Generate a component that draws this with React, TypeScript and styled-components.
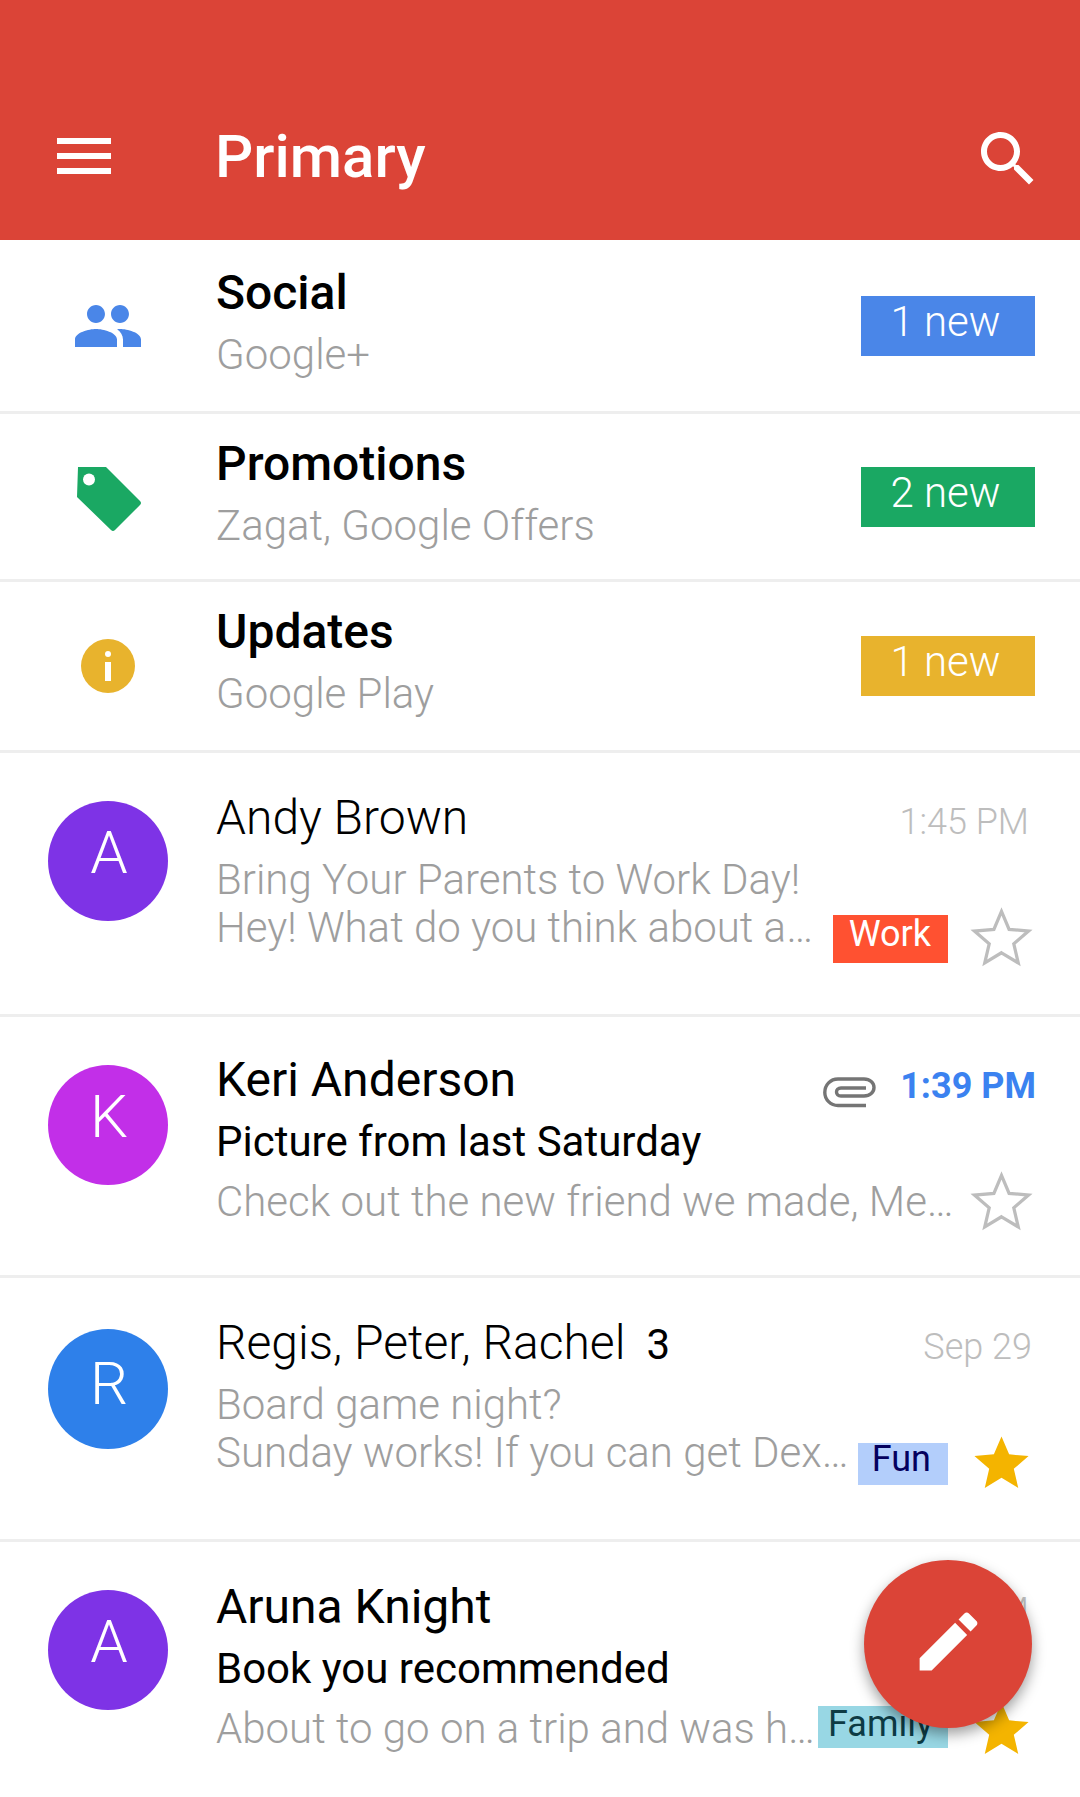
import React from 'react';
import styled, { createGlobalStyle } from 'styled-components';

const GlobalStyle = createGlobalStyle`
  html, body {
    margin: 0;
    padding: 0;
    background: #fff;
  }
  * {
    box-sizing: border-box;
  }
`;

const Screen = styled.div`
  position: relative;
  width: 1080px;
  height: 1797px;
  overflow: hidden;
  background: #fff;
  font-family: Roboto, 'Noto Sans', sans-serif;
`;

const Toolbar = styled.header`
  height: 240px;
  background: #db4437;
  display: flex;
  align-items: flex-start;
  padding: 120px 36px 0 48px;
  color: #fff;
`;

const ToolbarTitle = styled.h1`
  flex: 1;
  margin: 0 0 0 95px;
  font-size: 60px;
  line-height: 74px;
  font-weight: 500;
`;

const CategoryRow = styled.div<{ $height: number }>`
  height: ${({ $height }) => $height}px;
  display: flex;
  align-items: center;
  border-bottom: 3px solid #eeeeee;
  padding-right: 45px;
`;

const IconCell = styled.div`
  width: 216px;
  flex: none;
  padding-left: 72px;
  display: flex;
  align-items: center;
`;

const CategoryText = styled.div<{ $lift: number }>`
  flex: 1;
  margin-bottom: ${({ $lift }) => $lift}px;
`;

const CategoryTitle = styled.div`
  font-size: 48px;
  line-height: 62px;
  margin-bottom: 1px;
  font-weight: 500;
  color: #000;
`;

const CategorySub = styled.div`
  font-size: 42px;
  line-height: 60px;
  font-weight: 300;
  color: #9e9e9e;
`;

const Badge = styled.div<{ $color: string }>`
  width: 174px;
  height: 60px;
  padding-right: 5px;
  background: ${({ $color }) => $color};
  color: #fff;
  font-size: 42px;
  font-weight: 300;
  line-height: 52px;
  text-align: center;
`;

const MailRow = styled.div<{ $height: number; $top: number }>`
  height: ${({ $height }) => $height}px;
  display: flex;
  align-items: flex-start;
  border-bottom: 3px solid #eeeeee;
  padding: ${({ $top }) => $top}px 0 0 48px;
  &:last-of-type {
    border-bottom: none;
  }
`;

const Avatar = styled.div<{ $color: string; $top: number; $line: number }>`
  width: 120px;
  height: 120px;
  margin-top: ${({ $top }) => $top}px;
  padding-left: 2px;
  flex: none;
  border-radius: 50%;
  background: ${({ $color }) => $color};
  color: #fff;
  font-size: 60px;
  font-weight: 300;
  line-height: ${({ $line }) => $line}px;
  text-align: center;
`;

const MailBody = styled.div`
  flex: 1;
  min-width: 0;
  margin-left: 48px;
`;

const MailHead = styled.div`
  display: flex;
  align-items: center;
  height: 56px;
`;

const Sender = styled.span<{ $unread?: boolean }>`
  font-size: 48px;
  font-weight: ${({ $unread }) => ($unread ? 400 : 300)};
  color: #000;
`;

const ThreadCount = styled.span`
  margin-left: 21px;
  margin-top: 4px;
  font-size: 42px;
  font-weight: 400;
  color: #000;
`;

const MailTime = styled.span<{ $unread?: boolean; $right: number; $top: number }>`
  margin-left: auto;
  margin-top: ${({ $top }) => $top}px;
  margin-right: ${({ $right }) => $right}px;
  font-size: 36px;
  font-weight: ${({ $unread }) => ($unread ? 700 : 300)};
  color: ${({ $unread }) => ($unread ? '#3b82f0' : '#bdbdbd')};
`;

const ClipIcon = styled.svg`
  width: 53px;
  height: 31px;
  margin-left: auto;
  margin-top: 26px;
  & + ${MailTime} {
    margin-left: 24px;
  }
`;

const Subject = styled.div<{ $unread?: boolean }>`
  margin-top: 5px;
  font-size: 42px;
  line-height: 60px;
  font-weight: ${({ $unread }) => ($unread ? 400 : 300)};
  color: ${({ $unread }) => ($unread ? '#000' : '#9e9e9e')};
`;

const SnippetRow = styled.div<{ $unread?: boolean }>`
  display: flex;
  align-items: flex-start;
  margin-top: ${({ $unread }) => ($unread ? '0' : '-12px')};
`;

const Snippet = styled.div`
  flex: 1;
  min-width: 0;
  font-size: 42px;
  line-height: 60px;
  font-weight: 300;
  color: #9e9e9e;
  white-space: nowrap;
`;

const Tag = styled.span<{ $bg: string; $fg: string; $height: number; $left: number; $right: number; $top: number; $line: number }>`
  height: ${({ $height }) => $height}px;
  margin-top: ${({ $top }) => $top}px;
  padding: 0 ${({ $right }) => $right}px 0 ${({ $left }) => $left}px;
  background: ${({ $bg }) => $bg};
  color: ${({ $fg }) => $fg};
  font-size: 36px;
  line-height: ${({ $line }) => $line}px;
  white-space: nowrap;
`;

const StarBox = styled.div<{ $unread?: boolean }>`
  width: 132px;
  flex: none;
  display: flex;
  padding-left: 21px;
  margin-top: ${({ $unread }) => ($unread ? '-2px' : '8px')};
`;

const StarIcon = styled.svg`
  width: 65px;
  height: 65px;
  overflow: visible;
`;

const SearchIcon = styled.svg`
  width: 72px;
  height: 72px;
  margin-top: 3px;
`;

const PencilIcon = styled.svg`
  width: 77px;
  height: 77px;
  margin-bottom: 6px;
`;

const Fab = styled.button`
  position: absolute;
  left: 864px;
  top: 1560px;
  width: 168px;
  height: 168px;
  border: none;
  padding: 0;
  border-radius: 50%;
  background: #db4437;
  box-shadow: 0 6px 14px rgba(0, 0, 0, 0.38);
  display: flex;
  align-items: center;
  justify-content: center;
`;

const IconMenu = () => (
  <svg width="72" height="72" viewBox="0 0 24 24" fill="#fff">
    <path d="M3 18h18v-2H3v2zm0-5h18v-2H3v2zm0-7v2h18V6H3z" />
  </svg>
);

const IconSearch = () => (
  <SearchIcon viewBox="0 0 24 24" fill="#fff">
    <path d="M15.5 14h-.79l-.28-.27C15.41 12.59 16 11.11 16 9.5 16 5.91 13.09 3 9.5 3S3 5.91 3 9.5 5.91 16 9.5 16c1.61 0 3.09-.59 4.23-1.57l.27.28v.79l5 4.99L20.49 19l-4.99-5zm-6 0C7.01 14 5 11.99 5 9.5S7.01 5 9.5 5 14 7.01 14 9.5 11.99 14 9.5 14z" />
  </SearchIcon>
);

const IconGroup = () => (
  <svg width="72" height="72" viewBox="0 0 24 24" fill="#4a86e8">
    <path d="M16 11c1.66 0 2.99-1.34 2.99-3S17.66 5 16 5c-1.66 0-3 1.34-3 3s1.34 3 3 3zm-8 0c1.66 0 2.99-1.34 2.99-3S9.66 5 8 5C6.34 5 5 6.34 5 8s1.34 3 3 3zm0 2c-2.33 0-7 1.17-7 3.5V19h14v-2.5c0-2.33-4.67-3.5-7-3.5zm8 0c-.29 0-.62.02-.97.05 1.16.84 1.97 1.97 1.97 3.45V19h6v-2.5c0-2.33-4.67-3.5-7-3.5z" />
  </svg>
);

const IconTag = () => (
  <svg width="72" height="72" viewBox="-5 -6 72 72">
    <path fill="#1aa863" d="M1 0H29L63 34Q65 36 63 38L38 63Q36 65 34 63L0 30Z" />
    <circle cx="12" cy="12.5" r="6" fill="#fff" />
  </svg>
);

const IconInfo = () => (
  <svg width="72" height="72" viewBox="0 0 72 72">
    <circle cx="36" cy="36" r="27" fill="#e8b32d" />
    <circle cx="36" cy="24" r="3" fill="#fff" />
    <rect x="33" y="32" width="6" height="19" fill="#fff" />
  </svg>
);

const STAR = 'M12 17.27L18.18 21l-1.64-7.03L22 9.24l-7.19-.61L12 2 9.19 8.63 2 9.24l5.46 4.73L5.82 21z';

const Star = ({ on }: { on?: boolean }) => (
  <StarIcon viewBox="0 0 24 24">
    {on ? (
      <path d={STAR} fill="#f4b400" />
    ) : (
      <path d={STAR} fill="none" stroke="#bdbdbd" strokeWidth="1.2" />
    )}
  </StarIcon>
);

const Clip = () => (
  <ClipIcon viewBox="0 0 53 31" fill="none" stroke="#757575" strokeWidth="3.4">
    <path d="M43 28.5H15C7.5 28.5 1.8 22.5 1.8 15.5 1.8 8 7.5 2 15 2H41C47 2 51 6 51 10.5 51 15 47 19 41 19H18C15 19 13.5 17 13.5 15 13.5 13 15 11 18 11H43" />
  </ClipIcon>
);

const categories = [
  { title: 'Social', sub: 'Google+', badge: '1 new', color: '#4a86e8', height: 174, lift: 4, icon: <IconGroup /> },
  { title: 'Promotions', sub: 'Zagat, Google Offers', badge: '2 new', color: '#1aa863', height: 168, lift: 4, icon: <IconTag /> },
  { title: 'Updates', sub: 'Google Play', badge: '1 new', color: '#e8b32d', height: 171, lift: 8, icon: <IconInfo /> },
];

type Mail = {
  letter: string;
  color: string;
  rowTop: number;
  avatarTop: number;
  letterLine: number;
  sender: string;
  count?: string;
  time: string;
  timeRight: number;
  timeTop: number;
  clip?: boolean;
  unread?: boolean;
  subject: string;
  snippet: string;
  tag?: { text: string; bg: string; fg: string; height: number; left: number; right: number; top: number; line: number };
  starred?: boolean;
  height: number;
};

const mails: Mail[] = [
  {
    letter: 'A',
    color: '#7e33e6',
    rowTop: 36,
    avatarTop: 12,
    letterLine: 104,
    sender: 'Andy Brown',
    time: '1:45 PM',
    timeRight: 51,
    timeTop: 10,
    subject: 'Bring Your Parents to Work Day!',
    snippet: 'Hey! What do you think about a…',
    tag: { text: 'Work', bg: '#ff5131', fg: '#fff', height: 48, left: 16, right: 17, top: 17, line: 38 },
    height: 264,
  },
  {
    letter: 'K',
    color: '#c22fe8',
    rowTop: 34,
    avatarTop: 14,
    letterLine: 104,
    sender: 'Keri Anderson',
    time: '1:39 PM',
    timeRight: 44,
    timeTop: 14,
    clip: true,
    unread: true,
    subject: 'Picture from last Saturday',
    snippet: 'Check out the new friend we made, Me…',
    height: 261,
  },
  {
    letter: 'R',
    color: '#2e80ea',
    rowTop: 36,
    avatarTop: 15,
    letterLine: 110,
    sender: 'Regis, Peter, Rachel',
    count: '3',
    time: 'Sep 29',
    timeRight: 48,
    timeTop: 10,
    subject: 'Board game night?',
    snippet: 'Sunday works! If you can get Dex…',
    tag: { text: 'Fun', bg: '#b3cefb', fg: '#04005e', height: 42, left: 14, right: 17, top: 20, line: 32 },
    starred: true,
    height: 264,
  },
  {
    letter: 'A',
    color: '#7e33e6',
    rowTop: 36,
    avatarTop: 12,
    letterLine: 104,
    sender: 'Aruna Knight',
    time: '1:30 PM',
    timeRight: 51,
    timeTop: 10,
    unread: true,
    subject: 'Book you recommended',
    snippet: 'About to go on a trip and was h…',
    tag: { text: 'Family', bg: '#98d7e4', fg: '#0d3b44', height: 42, left: 10, right: 15, top: 7, line: 36 },
    starred: true,
    height: 255,
  },
];

const App = () => (
  <Screen>
    <GlobalStyle />
    <Toolbar>
      <IconMenu />
      <ToolbarTitle>Primary</ToolbarTitle>
      <IconSearch />
    </Toolbar>
    {categories.map((c) => (
      <CategoryRow key={c.title} $height={c.height}>
        <IconCell>{c.icon}</IconCell>
        <CategoryText $lift={c.lift}>
          <CategoryTitle>{c.title}</CategoryTitle>
          <CategorySub>{c.sub}</CategorySub>
        </CategoryText>
        <Badge $color={c.color}>{c.badge}</Badge>
      </CategoryRow>
    ))}
    {mails.map((m) => (
      <MailRow key={m.sender} $height={m.height} $top={m.rowTop}>
        <Avatar $color={m.color} $top={m.avatarTop} $line={m.letterLine}>
          {m.letter}
        </Avatar>
        <MailBody>
          <MailHead>
            <Sender $unread={m.unread}>{m.sender}</Sender>
            {m.count && <ThreadCount>{m.count}</ThreadCount>}
            {m.clip && <Clip />}
            <MailTime $right={m.timeRight} $top={m.timeTop} $unread={m.unread && m.clip}>
              {m.time}
            </MailTime>
          </MailHead>
          <Subject $unread={m.unread}>{m.subject}</Subject>
          <SnippetRow $unread={m.unread}>
            <Snippet>{m.snippet}</Snippet>
            {m.tag && (
              <Tag
                $bg={m.tag.bg}
                $fg={m.tag.fg}
                $height={m.tag.height}
                $left={m.tag.left}
                $right={m.tag.right}
                $top={m.tag.top}
                $line={m.tag.line}
              >
                {m.tag.text}
              </Tag>
            )}
            <StarBox $unread={m.unread}>
              <Star on={m.starred} />
            </StarBox>
          </SnippetRow>
        </MailBody>
      </MailRow>
    ))}
    <Fab aria-label="Compose">
      <PencilIcon viewBox="0 0 24 24" fill="#fff">
        <path d="M3 17.25V21h3.75L17.81 9.94l-3.75-3.75L3 17.25zM20.71 7.04c.39-.39.39-1.02 0-1.41l-2.34-2.34c-.39-.39-1.02-.39-1.41 0l-1.83 1.83 3.75 3.75 1.83-1.83z" />
      </PencilIcon>
    </Fab>
  </Screen>
);

export default App;
